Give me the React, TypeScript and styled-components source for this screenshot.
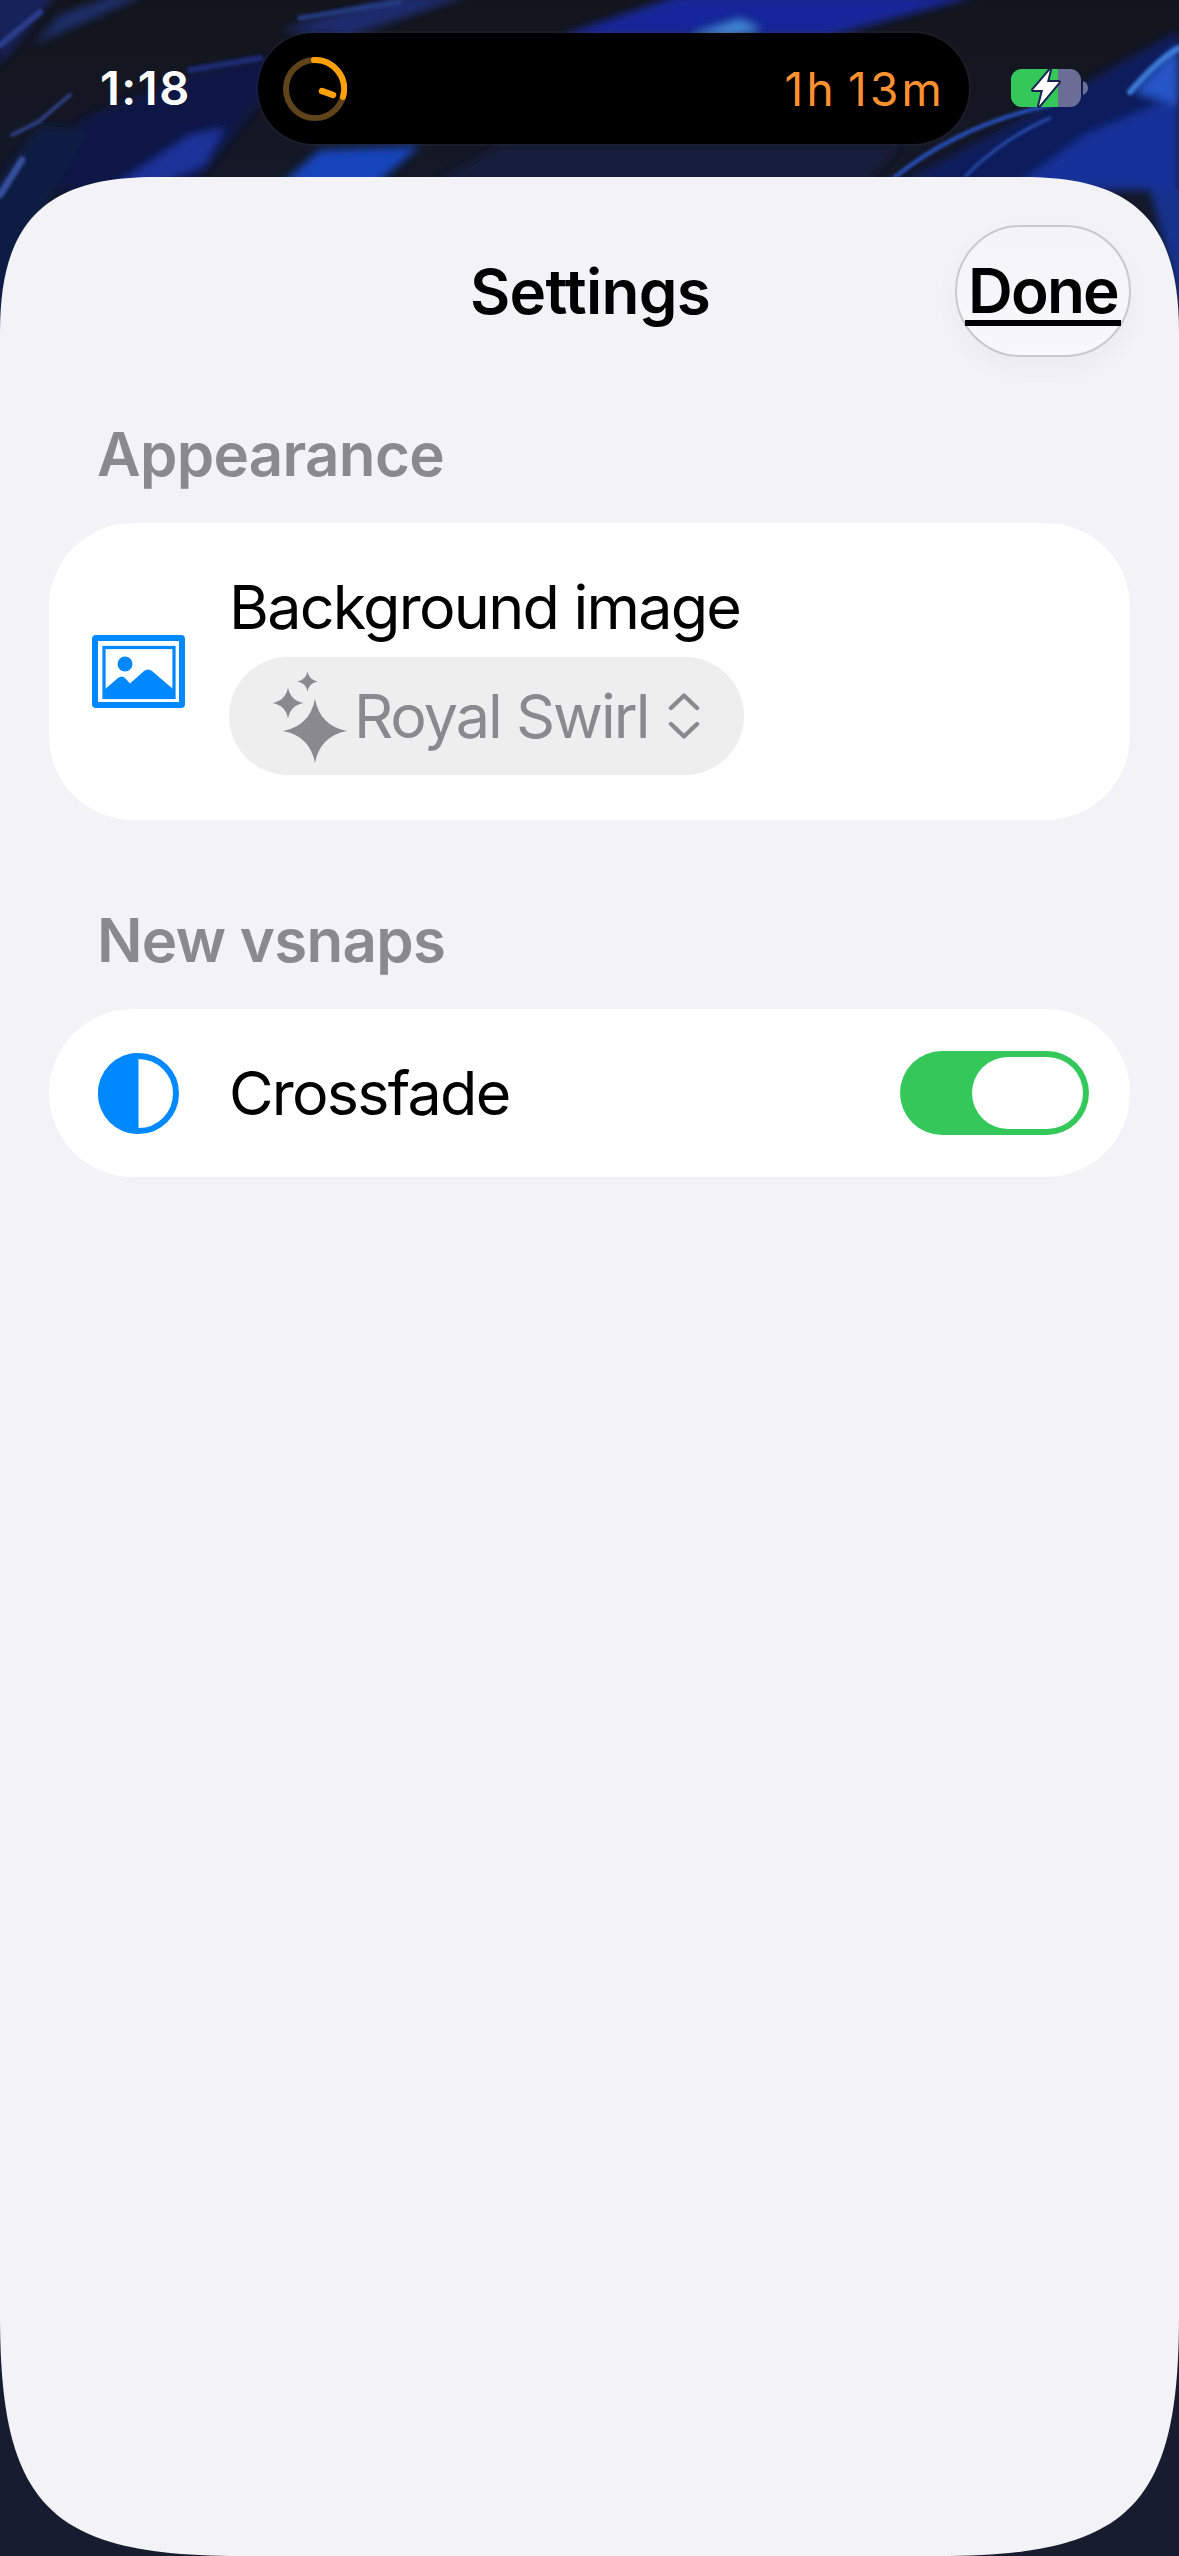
import React from "react";
import styled, { createGlobalStyle } from "styled-components";

const Global = createGlobalStyle`
  html, body { margin: 0; padding: 0; background: #171c2f; }
  body { font-family: Inter, "Noto Sans", "Liberation Sans", sans-serif; -webkit-font-smoothing: antialiased; }
`;

const Page = styled.div`
  position: relative;
  width: 1179px;
  height: 2556px;
  overflow: hidden;
  background: #14161f;
  display: flex;
  flex-direction: column;
`;

const WallpaperArt = styled.svg`
  position: absolute;
  inset: 0;
  width: 1179px;
  height: 2556px;
`;

const StatusBar = styled.header`
  position: relative;
  height: 177px;
  padding: 33px 0 0 100px;
  box-sizing: border-box;
  display: flex;
  align-items: flex-start;
`;

const Time = styled.div`
  width: 158px;
  height: 111px;
  line-height: 110px;
  font-size: 47px;
  font-weight: 600;
  letter-spacing: 1.5px;
  color: #fff;
`;

const Island = styled.div`
  width: 711px;
  height: 111px;
  border-radius: 56px;
  background: #000;
  box-shadow: 0 0 0 2px rgba(255, 255, 255, 0.03);
  display: flex;
  align-items: center;
  justify-content: space-between;
  padding: 0 24px 0 25px;
  box-sizing: border-box;
`;

const IslandTimer = styled.span`
  font-size: 46px;
  font-weight: 400;
  letter-spacing: 3.2px;
  word-spacing: -5px;
  color: #ff9230;
`;

const BatteryIcon = styled.svg`
  width: 77px;
  height: 38px;
  margin: 36px 0 0 42px;
  flex: none;
  overflow: visible;
`;

const Sheet = styled.main`
  position: relative;
  flex: 1;
  background: #f2f2f7;
  clip-path: path("M155 0 H1024 C1134 0 1179 45 1179 155 V2139 C1179 2329 1129 2379 939 2379 H240 C50 2379 0 2329 0 2139 V155 C0 45 45 0 155 0 Z");
  padding: 48px 48px 0 49px;
  box-sizing: border-box;
`;

const NavBar = styled.div`
  display: grid;
  grid-template-columns: 1fr auto 1fr;
  align-items: center;
  height: 132px;
`;

const Title = styled.h1`
  grid-column: 2;
  margin: 0;
  font-size: 62px;
  font-weight: 600;
  letter-spacing: -0.7px;
  color: #000;
`;

const DoneButton = styled.button`
  grid-column: 3;
  justify-self: end;
  width: 176px;
  height: 132px;
  padding: 0;
  border: 2px solid #c9c9cc;
  border-radius: 66px;
  background: linear-gradient(180deg, #f3f3f8 0%, #f7f7fc 100%);
  box-shadow: 0 10px 26px rgba(0, 0, 0, 0.035);
  box-sizing: border-box;
  font: inherit;
  color: #000;
  display: flex;
  align-items: center;
  justify-content: center;
`;

const DoneLabel = styled.span`
  display: block;
  margin-top: 5px;
  padding: 0 3px;
  font-size: 62px;
  line-height: 58px;
  font-weight: 600;
  letter-spacing: -1.8px;
  border-bottom: 6px solid #000;
`;

const SectionLabel = styled.h2<{ $top: number }>`
  margin: ${(p) => p.$top}px 0 34px 48px;
  font-size: 60px;
  line-height: 70px;
  font-weight: 600;
  letter-spacing: -0.7px;
  color: #8a8a8e;
`;

const Card = styled.section<{ $height: number }>`
  height: ${(p) => p.$height}px;
  width: 1081px;
  border-radius: 84px;
  background: #fff;
  display: flex;
  align-items: center;
  box-sizing: border-box;
`;

const IconSlot = styled.div`
  width: 178px;
  margin-right: 6px;
  flex: none;
  display: flex;
  justify-content: center;
`;

const Column = styled.div`
  display: flex;
  flex-direction: column;
  align-items: flex-start;
  margin-left: -4px;
`;

const RowLabel = styled.span`
  font-size: 61px;
  line-height: 76px;
  font-weight: 400;
  letter-spacing: -1.75px;
  color: #000;
`;

const PickerPill = styled.div`
  margin-top: 12px;
  width: 515px;
  height: 118px;
  border-radius: 59px;
  background: #eeeeef;
  color: #8a8a8e;
  display: flex;
  align-items: center;
  padding-left: 44px;
  box-sizing: border-box;
`;

const PickerText = styled.span`
  margin: 0 0 0 8px;
  font-size: 61px;
  font-weight: 400;
  letter-spacing: -2px;
`;

const Sparkles = styled.svg`
  width: 73px;
  height: 90px;
  flex: none;
  margin-top: 2px;
  overflow: visible;
`;

const Chevrons = styled.svg`
  width: 32px;
  height: 46px;
  flex: none;
  margin: 0 0 0 20px;
`;

const ToggleTrack = styled.div`
  width: 189px;
  height: 84px;
  margin-left: auto;
  margin-right: 41px;
  border-radius: 42px;
  background: #34c759;
  padding: 6px;
  box-sizing: border-box;
  display: flex;
  justify-content: flex-end;
`;

const ToggleKnob = styled.div`
  width: 111px;
  height: 72px;
  border-radius: 36px;
  background: #fff;
`;

const star = (cx: number, cy: number, r: number) => {
  const k = r * 0.16;
  return `M${cx} ${cy - r} Q${cx + k} ${cy - k} ${cx + r} ${cy} Q${cx + k} ${cy + k} ${cx} ${cy + r} Q${cx - k} ${cy + k} ${cx - r} ${cy} Q${cx - k} ${cy - k} ${cx} ${cy - r} Z`;
};

const Wallpaper = () => (
  <WallpaperArt viewBox="0 0 1179 2556" aria-hidden="true">
    <defs>
      <filter id="soft" x="-20%" y="-20%" width="140%" height="140%">
        <feGaussianBlur stdDeviation="4" />
      </filter>
      <filter id="softer" x="-20%" y="-20%" width="140%" height="140%">
        <feGaussianBlur stdDeviation="1.8" />
      </filter>
      <linearGradient id="wallBase" x1="0" y1="0" x2="0" y2="1">
        <stop offset="0" stopColor="#14151c" />
        <stop offset="0.12" stopColor="#141a30" />
        <stop offset="1" stopColor="#171c2f" />
      </linearGradient>
    </defs>
    <rect width="1179" height="2556" fill="url(#wallBase)" />
    <g filter="url(#soft)">
      <path d="M-10 -10 L60 -10 L0 65 Z" fill="#14245a" />
      <path d="M33 45 L60 15 L115 -5 L145 -5 Z" fill="#1b2e6c" />
      <path d="M-10 185 L90 115 L200 70 L300 52 L255 110 L190 190 L-10 190 Z" fill="#0f1745" />
      <path d="M-10 360 L-10 190 L40 125 L90 130 L50 200 Z" fill="#101a42" />
      <path d="M115 185 L190 135 L225 128 L205 165 L160 185 Z" fill="#1a3398" />
      <path d="M280 185 L320 150 L420 146 L375 185 Z" fill="#1644bc" />
      <path d="M420 190 L500 146 L900 146 L860 190 Z" fill="#131a3a" />
      <path d="M560 36 L680 -5 L980 -5 L830 36 Z" fill="#17279a" />
      <path d="M690 36 L740 20 L760 30 L730 36 Z" fill="#3f86d8" />
      <path d="M280 30 L400 -5 L470 -5 L350 36 Z" fill="#1a2c6e" />
      <path d="M885 190 L1010 125 L1179 30 L1179 190 Z" fill="#0f1f5c" />
      <path d="M1010 190 L1085 135 L1179 95 L1179 190 Z" fill="#14309a" />
      <path d="M1135 92 L1179 45 L1179 105 Z" fill="#2655c8" />
      <path d="M1150 190 L1190 190 L1190 340 Z" fill="#14308c" />
    </g>
    <g filter="url(#softer)" fill="none" strokeLinecap="round">
      <path d="M0 45 L40 12" stroke="#2a3d8c" strokeWidth="6" />
      <path d="M0 195 L22 160" stroke="#34509f" strokeWidth="7" />
      <path d="M12 135 L38 122 L70 95" stroke="#2f4590" strokeWidth="3.5" />
      <path d="M190 70 L260 58" stroke="#1b2c72" strokeWidth="6" />
      <path d="M300 18 L400 2" stroke="#243a80" strokeWidth="5" />
      <path d="M895 177 Q960 125 1050 105" stroke="#2650bc" strokeWidth="4" />
      <path d="M965 177 Q1000 140 1050 118" stroke="#2a52b8" strokeWidth="2.5" />
      <path d="M1130 92 Q1160 58 1179 48" stroke="#3a78d4" strokeWidth="6" />
    </g>
  </WallpaperArt>
);

export default function App() {
  return (
    <Page>
      <Global />
      <Wallpaper />
      <StatusBar>
        <Time>1:18</Time>
        <Island>
          <svg width="64" height="64" viewBox="0 0 64 64" aria-hidden="true">
            <circle cx="32" cy="32" r="29" fill="none" stroke="#5f431a" strokeWidth="6" />
            <path d="M31 3 A29 29 0 0 1 60 40" fill="none" stroke="#ff9f0a" strokeWidth="6" strokeLinecap="round" />
            <path d="M39 34 L50 38" fill="none" stroke="#ff9f0a" strokeWidth="6.5" strokeLinecap="round" />
          </svg>
          <IslandTimer>1h 13m</IslandTimer>
        </Island>
        <BatteryIcon viewBox="0 0 77 38" aria-hidden="true">
          <rect x="0" y="0" width="70" height="38" rx="11" fill="#6a6d96" />
          <path d="M0 11 A11 11 0 0 1 11 0 H47 V38 H11 A11 11 0 0 1 0 27 Z" fill="#34c759" />
          <path d="M72 12 Q77 14 77 19 Q77 24 72 26 Z" fill="#6a6d96" />
          <path d="M39 1 L22 21 L32 21 L28 37 L48 13 L36 13 Z" fill="#fff" stroke="#1a2150" strokeWidth="4" strokeLinejoin="round" paintOrder="stroke" />
        </BatteryIcon>
      </StatusBar>
      <Sheet>
        <NavBar>
          <Title>Settings</Title>
          <DoneButton>
            <DoneLabel>Done</DoneLabel>
          </DoneButton>
        </NavBar>
        <SectionLabel $top={62}>Appearance</SectionLabel>
        <Card $height={297}>
          <IconSlot>
            <svg width="93" height="73" viewBox="0 0 93 73" aria-hidden="true">
              <rect x="3" y="3" width="87" height="67" rx="1" fill="none" stroke="#0088ff" strokeWidth="6" />
              <rect x="12" y="12.5" width="70" height="50" fill="none" stroke="#0088ff" strokeWidth="3.2" />
              <ellipse cx="33" cy="29" rx="7.5" ry="7.5" fill="#0088ff" />
              <path d="M12 55 L26 43 Q30 40 33 43 L38 48.5 L52 36 Q56 33 60 36 L81 54 V63 H12 Z" fill="#0088ff" />
            </svg>
          </IconSlot>
          <Column>
            <RowLabel>Background image</RowLabel>
            <PickerPill>
              <Sparkles viewBox="0 0 73 90" aria-hidden="true">
                <path d={star(42, 59, 32)} fill="#8a8a8e" />
                <path d={star(15, 31, 15.5)} fill="#8a8a8e" />
                <path d={star(34.5, 9.5, 10)} fill="#8a8a8e" />
              </Sparkles>
              <PickerText>Royal Swirl</PickerText>
              <Chevrons viewBox="0 0 32 46" aria-hidden="true">
                <path d="M3 15 L16 2.5 L29 15 M3 31 L16 43.5 L29 31" fill="none" stroke="#8a8a8e" strokeWidth="4.4" strokeLinecap="round" strokeLinejoin="round" />
              </Chevrons>
            </PickerPill>
          </Column>
        </Card>
        <SectionLabel $top={85}>New vsnaps</SectionLabel>
        <Card $height={168}>
          <IconSlot>
            <svg width="81" height="81" viewBox="0 0 81 81" aria-hidden="true">
              <circle cx="40.5" cy="40.5" r="37.5" fill="none" stroke="#0088ff" strokeWidth="6" />
              <path d="M40.5 0 A40.5 40.5 0 0 0 40.5 81 Z" fill="#0088ff" />
            </svg>
          </IconSlot>
          <Column>
            <RowLabel>Crossfade</RowLabel>
          </Column>
          <ToggleTrack>
            <ToggleKnob />
          </ToggleTrack>
        </Card>
      </Sheet>
    </Page>
  );
}
